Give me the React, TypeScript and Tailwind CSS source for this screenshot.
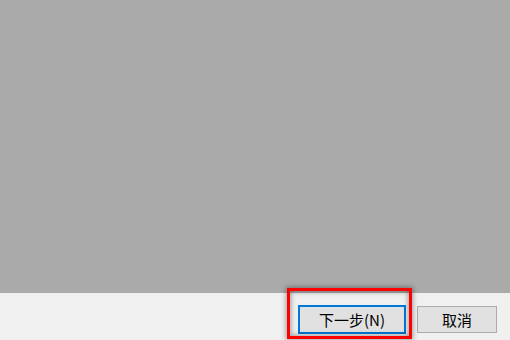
import React from 'react';

const font = { fontFamily: '"Noto Sans CJK SC", "Noto Sans", sans-serif' };

export default function App() {
  return (
    <div className="relative w-[510px] h-[340px] flex flex-col overflow-hidden" style={font}>
      {/* Dialog body */}
      <div className="h-[293px] bg-[#aaaaaa]" />

      {/* Footer buttons */}
      <div className="flex-1 bg-[#f0f0f0] flex justify-end items-start pt-[12px] pr-[13px]">
        <div className="flex items-center gap-[11px] h-[29px]">
          <button className="w-[108px] h-[29px] border-2 border-[#0078d7] bg-[#e1e1e1] text-[15px] leading-none text-black flex items-center justify-center">
            下一步(N)
          </button>
          <button className="w-[80px] h-[27px] border border-[#adadad] bg-[#e1e1e1] text-[15px] leading-none text-black flex items-center justify-center">
            取消
          </button>
        </div>
      </div>

      {/* Highlight annotation */}
      <div className="absolute left-[287px] top-[288px] w-[125px] h-[51px] border-[3px] border-[#ff0000] shadow-[0_0_5px_1px_rgba(0,0,0,0.35),inset_0_0_5px_1px_rgba(0,0,0,0.35)] pointer-events-none" />
    </div>
  );
}
